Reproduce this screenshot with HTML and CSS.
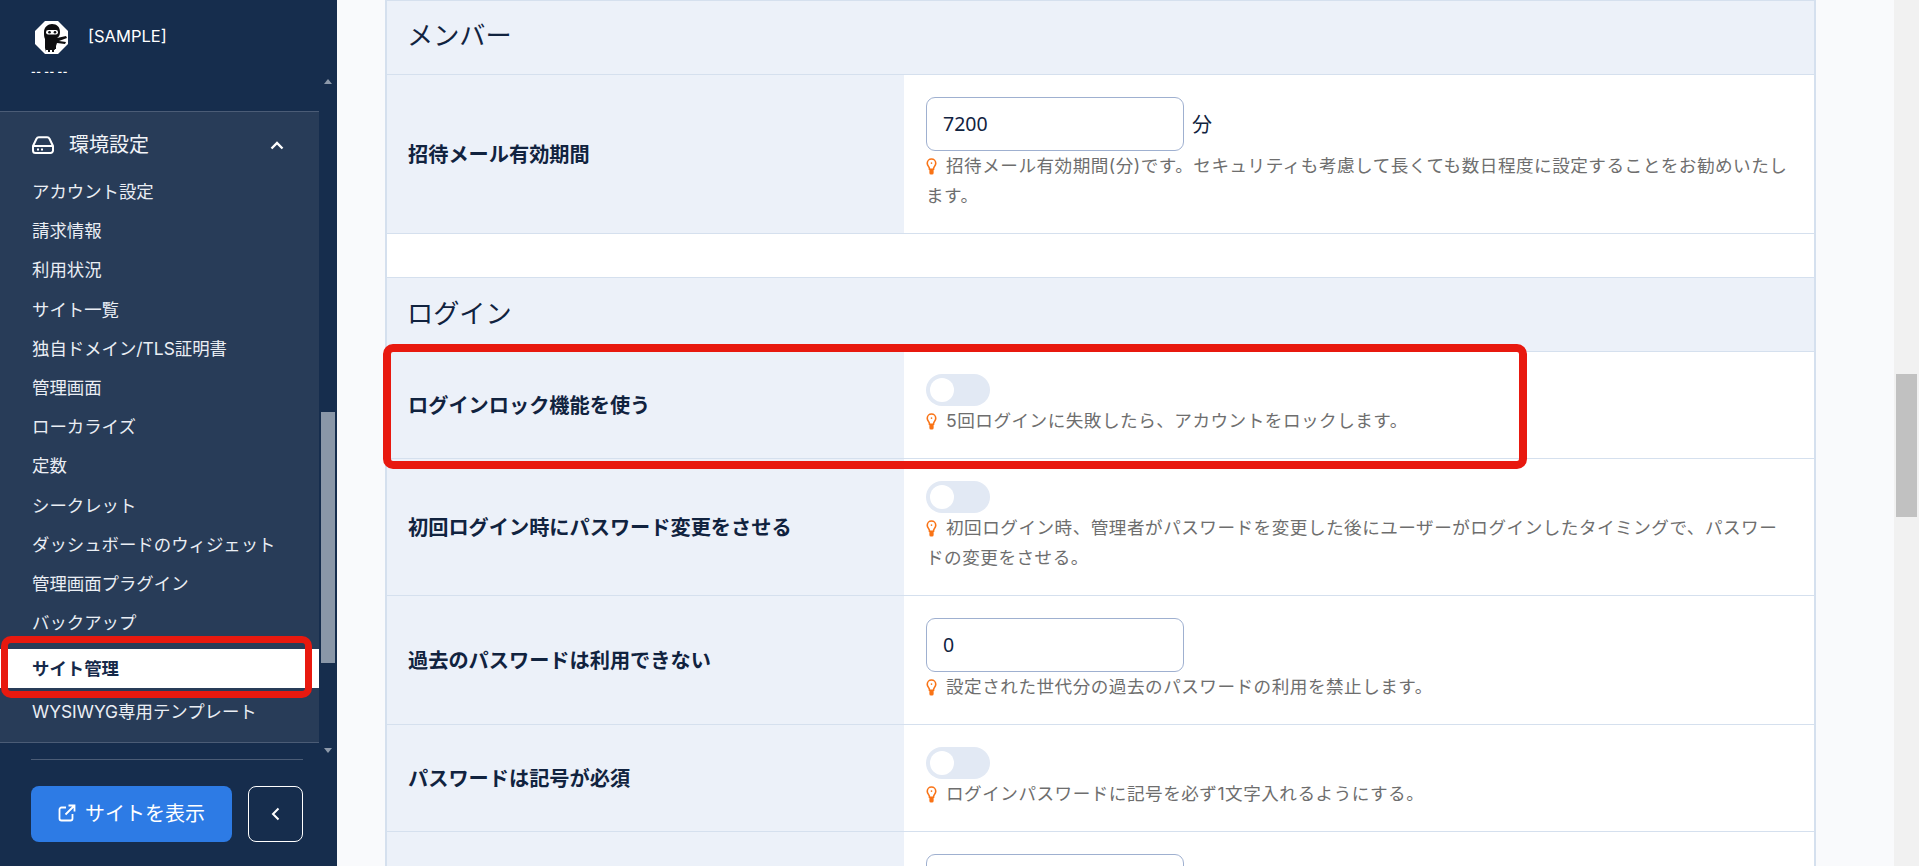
FILE: index.html
```html
<!DOCTYPE html>
<html lang="ja">
<head>
<meta charset="utf-8">
<title>サイト管理</title>
<link rel="stylesheet" href="styles.css">
</head>
<body>
<svg class="sprite" width="0" height="0" aria-hidden="true">
  <symbol id="bulb" viewBox="0 0 10 16">
    <path d="M5 1a4 4 0 0 0-4 4c0 1.700 1 2.600 1.600 3.600.4.700.5 1.400.5 2h3.800c0-.6.100-1.300.5-2C8 7.600 9 6.700 9 5a4 4 0 0 0-4-4z" fill="none" stroke="#f97316" stroke-width="1.500"/>
    <circle cx="5" cy="4.800" r=".8" fill="#f97316"/>
    <path d="M3 10.500h4V14a1.500 1.500 0 0 1-1.500 1.500h-1A1.500 1.500 0 0 1 3 14z" fill="#f97316"/>
  </symbol>
</svg>
<div class="app">
  <aside class="sidebar">
    <div class="brand">
      <div class="brand-row">
        <svg class="logo" viewBox="0 0 33 33" aria-hidden="true">
          <path d="M10 0h13l10 10v13L23 33H10L0 23V10z" fill="#fff"/>
          <path d="M9 11c0-5 4-8 8-8 5 0 8 3 8 8 0 3-1 5-3 6l9-2 1 2-8 3 7 1-1 2-8-1-1 3v3h-1l-1 3h-8l-1-4v-9c-1-2-1-4-1-7z" fill="#0e0e10"/>
          <rect x="11" y="9" width="12" height="4.500" rx="2.200" fill="#fff"/>
          <circle cx="14.500" cy="11.200" r="1.300" fill="#0e0e10"/>
          <circle cx="20" cy="11.200" r="1.300" fill="#0e0e10"/>
          <path d="M11 29h2v4h-2zM15 29h2v4h-2zM19 29h2v4h-2z" fill="#fff"/>
        </svg>
        <span class="brand-name">[SAMPLE]</span>
      </div>
      <div class="brand-sub">-- -- --</div>
    </div>
    <div class="scroller">
      <div class="scroll-body">
        <nav class="nav">
          <div class="nav-head">
            <svg class="nav-icon" viewBox="0 0 22 18" aria-hidden="true">
              <path d="M1 10 4.500 2.800A2.500 2.500 0 0 1 6.800 1.300h8.400a2.500 2.500 0 0 1 2.300 1.500L21 10v4.500a2.500 2.500 0 0 1-2.500 2.500h-15A2.500 2.500 0 0 1 1 14.500zM1 10h20" fill="none" stroke="#fff" stroke-width="2" stroke-linejoin="round"/>
              <path d="M5 13.500h2M9 13.500h2" stroke="#fff" stroke-width="1.800"/>
            </svg>
            <span class="nav-title">環境設定</span>
            <svg class="nav-chevron" viewBox="0 0 14 9" aria-hidden="true"><path d="M1.500 7.500 7 2l5.500 5.500" fill="none" stroke="#fff" stroke-width="2.400"/></svg>
          </div>
          <ul class="nav-list">
            <li>アカウント設定</li>
            <li>請求情報</li>
            <li>利用状況</li>
            <li>サイト一覧</li>
            <li>独自ドメイン/TLS証明書</li>
            <li>管理画面</li>
            <li>ローカライズ</li>
            <li>定数</li>
            <li>シークレット</li>
            <li>ダッシュボードのウィジェット</li>
            <li>管理画面プラグイン</li>
            <li>バックアップ</li>
            <li class="active">サイト管理<span class="mark mark-nav"></span></li>
            <li>WYSIWYG専用テンプレート</li>
          </ul>
        </nav>
      </div>
      <div class="side-scrollbar">
        <span class="arrow arrow-up"></span>
        <span class="side-track"><span class="side-thumb"></span></span>
        <span class="arrow arrow-down"></span>
      </div>
    </div>
    <div class="side-foot">
      <div class="foot-buttons">
        <button class="btn-view" type="button">
          <svg class="ext" viewBox="0 0 18 18" aria-hidden="true">
            <path d="M8 3.500H3.500a2 2 0 0 0-2 2V14.500a2 2 0 0 0 2 2h9a2 2 0 0 0 2-2V10" fill="none" stroke="#fff" stroke-width="1.800"/>
            <path d="M7.500 10.500 16 2M10.500 1.500h6v6" fill="none" stroke="#fff" stroke-width="1.800"/>
          </svg>
          <span class="btn-text">サイトを表示</span>
        </button>
        <button class="btn-back" type="button" aria-label="閉じる">
          <svg viewBox="0 0 9 14" width="9" height="14" aria-hidden="true"><path d="M7.500 1.500 2 7l5.500 5.500" fill="none" stroke="#fff" stroke-width="2"/></svg>
        </button>
      </div>
    </div>
  </aside>

  <main class="main">
    <div class="panel">
      <h2 class="section-head">メンバー</h2>
      <div class="row">
        <div class="label">招待メール有効期間</div>
        <div class="value">
          <div class="input-line"><input class="input" type="text" value="7200"><span class="unit">分</span></div>
          <p class="help"><svg class="bulb"><use href="#bulb"/></svg>招待メール有効期間(分)です。セキュリティも考慮して長くても数日程度に設定することをお勧めいたします。</p>
        </div>
      </div>
      <div class="spacer"></div>
      <h2 class="section-head section-second">ログイン</h2>
      <div class="row">
        <div class="label">ログインロック機能を使う</div>
        <div class="value">
          <span class="toggle"><span class="knob"></span></span>
          <p class="help"><svg class="bulb"><use href="#bulb"/></svg>5回ログインに失敗したら、アカウントをロックします。</p>
        </div>
        <span class="mark mark-row"></span>
      </div>
      <div class="row">
        <div class="label">初回ログイン時にパスワード変更をさせる</div>
        <div class="value">
          <span class="toggle"><span class="knob"></span></span>
          <p class="help"><svg class="bulb"><use href="#bulb"/></svg>初回ログイン時、管理者がパスワードを変更した後にユーザーがログインしたタイミングで、パスワードの変更をさせる。</p>
        </div>
      </div>
      <div class="row">
        <div class="label">過去のパスワードは利用できない</div>
        <div class="value">
          <div class="input-line"><input class="input" type="text" value="0"></div>
          <p class="help"><svg class="bulb"><use href="#bulb"/></svg>設定された世代分の過去のパスワードの利用を禁止します。</p>
        </div>
      </div>
      <div class="row">
        <div class="label">パスワードは記号が必須</div>
        <div class="value">
          <span class="toggle"><span class="knob"></span></span>
          <p class="help"><svg class="bulb"><use href="#bulb"/></svg>ログインパスワードに記号を必ず1文字入れるようにする。</p>
        </div>
      </div>
      <div class="row">
        <div class="label"></div>
        <div class="value">
          <div class="input-line"><input class="input" type="text" value=""></div>
        </div>
      </div>
    </div>
  </main>

  <div class="page-scrollbar"><span class="page-thumb"></span></div>
</div>
</body>
</html>
```

FILE: styles.css
```css
* { box-sizing: border-box; }
html, body { margin: 0; height: 100%; overflow: hidden; }
body {
  font-family: Inter, "Noto Sans CJK JP", "Noto Sans", sans-serif;
  color: #15294a;
  background: #f9fafc;
}
.sprite { position: absolute; }
.app { display: flex; height: 866px; }

/* sidebar */
.sidebar {
  flex: 0 0 337px;
  display: flex;
  flex-direction: column;
  background: #162d4d;
  color: #fff;
}
.brand { height: 75px; padding: 21px 0 0 31px; }
.brand-row { display: flex; align-items: center; gap: 20px; height: 33px; padding-left: 4px; }
.logo { width: 33px; height: 33px; flex: none; }
.brand-name { font-size: 16.500px; line-height: 1; position: relative; top: -1px; }
.brand-sub { margin-top: 14px; font-size: 10px; line-height: 7px; letter-spacing: .5px; font-weight: 700; }

.scroller { flex: 0 0 682px; display: flex; }
.scroll-body { width: 319px; padding-top: 36px; }
.nav {
  height: 632px;
  background: #283c58;
  border-top: 1px solid #4b5c76;
  border-bottom: 1px solid #4b5c76;
  overflow: hidden;
}
.nav-head { display: flex; align-items: center; height: 60px; padding: 6px 0 0 32px; }
.nav-icon { width: 22px; height: 18px; flex: none; }
.nav-title { margin-left: 15px; font-size: 20px; line-height: 1; color: #f2f4f8; }
.nav-chevron { width: 14px; height: 9px; margin-left: auto; margin-right: 35px; }
.nav-list { list-style: none; margin: 0; padding: 0; }
.nav-list li {
  height: 39.200px;
  padding-left: 32px;
  font-size: 17.400px;
  line-height: 39.200px;
  color: #eaeef4;
  white-space: nowrap;
}
.nav-list li.active {
  position: relative;
  margin: 7px 0 4px;
  background: #fff;
  color: #15294a;
  font-weight: 700;
}
.mark {
  position: absolute;
  z-index: 2;
  border: 7px solid #e8190f;
  border-radius: 10px;
  pointer-events: none;
}
.mark-nav { left: 1px; right: 7px; top: -13px; bottom: -10px; }

.side-scrollbar { width: 18px; display: flex; flex-direction: column; align-items: center; }
.arrow { width: 0; height: 0; flex: none; border-left: 4px solid transparent; border-right: 4px solid transparent; }
.arrow-up { margin-top: 4px; border-bottom: 5px solid #8d99aa; }
.arrow-down { margin-bottom: 4px; border-top: 5px solid #8d99aa; }
.side-track { flex: 1; width: 14px; padding-top: 328px; }
.side-thumb { display: block; width: 14px; height: 251px; background: #8a97a8; }

.side-foot { flex: 1; padding: 2px 34px 0 31px; }
.foot-buttons {
  display: flex;
  gap: 16px;
  border-top: 1px solid #4b5c76;
  padding-top: 26px;
}
.btn-view, .btn-back {
  height: 56px;
  border-radius: 8px;
  color: #fff;
  font-family: inherit;
  cursor: pointer;
}
.btn-view {
  flex: 0 0 201px;
  display: flex;
  align-items: center;
  justify-content: center;
  gap: 9px;
  background: #2d7be5;
  border: 0;
  font-size: 20px;
}
.btn-text { line-height: 1; margin-top: -1px; }
.ext { width: 18px; height: 18px; flex: none; margin-top: -2px; }
.btn-back {
  flex: 0 0 55px;
  display: flex;
  align-items: center;
  justify-content: center;
  background: transparent;
  border: 1px solid #fff;
}

/* main */
.main { flex: 1; min-width: 0; overflow: hidden; padding-left: 48px; }
.panel {
  width: 1431px;
  background: #fff;
  border: solid #d5e0ee;
  border-width: 1px 2px 0;
}
.section-head {
  margin: 0;
  height: 74px;
  padding-left: 20px;
  background: #ecf1f9;
  border-bottom: 1px solid #d5e0ee;
  font-size: 26.200px;
  font-weight: 400;
  line-height: 70px;
  color: #11233f;
}
.section-second { height: 75px; border-top: 1px solid #d5e0ee; line-height: 71px; }
.spacer { height: 43px; }
.row {
  position: relative;
  display: flex;
  border-bottom: 1px solid #d5e0ee;
}
.label {
  flex: 0 0 517px;
  display: flex;
  align-items: center;
  padding: 0 0 2px 21px;
  background: #ecf1f9;
  font-size: 20.200px;
  font-weight: 700;
  color: #11233f;
}
.value { flex: 1; min-width: 0; padding: 22px; }
.input-line { display: flex; align-items: center; gap: 8px; }
.input {
  width: 258px;
  height: 54px;
  padding: 0 16px 1px;
  border: 1px solid #9fb0d0;
  border-radius: 9px;
  background: #fff;
  color: #11233f;
  font-family: "Noto Sans", Inter, sans-serif;
  font-size: 19.500px;
}
.unit { font-size: 20px; margin-top: -1px; color: #11233f; }
.help {
  margin: 0;
  font-size: 17.600px;
  line-height: 30px;
  letter-spacing: 0.5px;
  color: #6e6e6e;
}
.bulb { width: 11px; height: 17px; margin-right: 9px; vertical-align: -3px; }
.toggle { display: block; width: 64px; height: 32px; padding: 4px 0 0 4px; border-radius: 16px; background: #e2e9f4; }
.knob { display: block; width: 24px; height: 24px; border-radius: 50%; background: #fff; }
.mark-row { left: -4px; top: -8px; width: 1144px; height: 125px; border-width: 8px; }

/* page scrollbar */
.page-scrollbar { flex: 0 0 25px; padding: 374px 2px 0; background: #f1f1f1; }
.page-thumb { display: block; height: 143px; background: #c1c1c1; }
```
